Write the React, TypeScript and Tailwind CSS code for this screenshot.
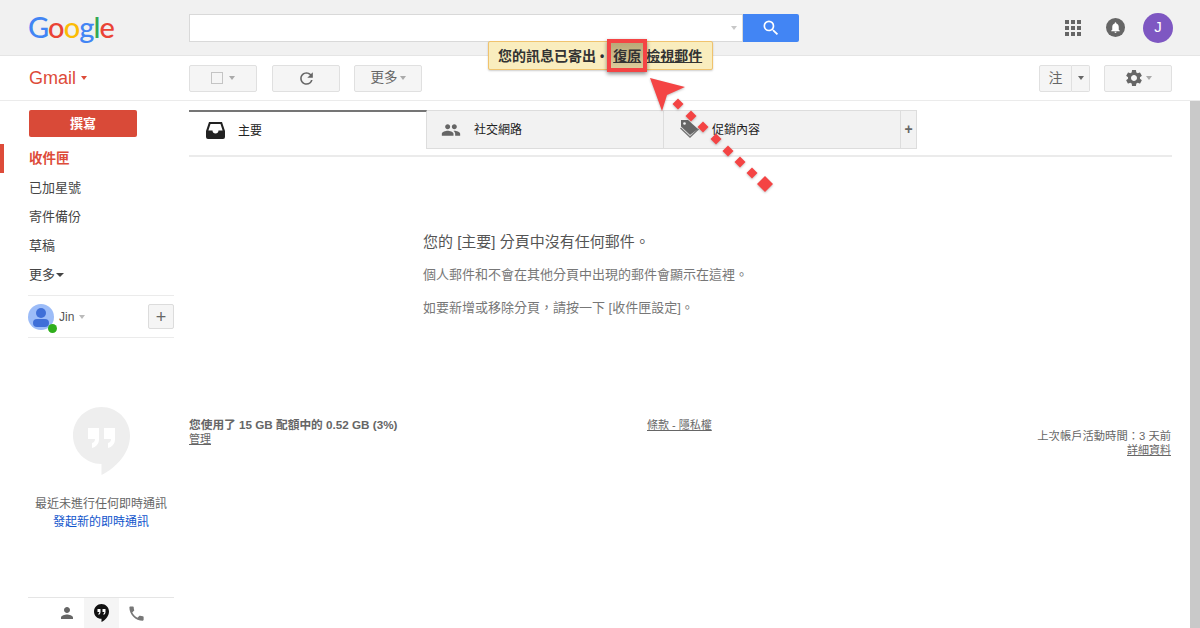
import { MdApps, MdNotifications, MdPeople, MdPerson, MdPhone, MdRefresh, MdSearch, MdSettings } from "react-icons/md";

const font = "font-['Liberation_Sans','Noto_Sans_CJK_TC',sans-serif]";

function Caret({ className }: { className: string }) {
  return <span className={"inline-block w-0 h-0 border-x-[3.5px] border-x-transparent border-t-[4px] " + className} />;
}

function ToolButton({ children, className = "w-[68px]" }: { children: React.ReactNode; className?: string }) {
  return (
    <div className={"h-[27px] flex items-center justify-center rounded-[2px] border border-[#e0e0e0] bg-[#f5f5f5] text-[#666] " + className}>
      {children}
    </div>
  );
}

function Tab({ icon, label, active, className }: { icon: React.ReactNode; label: string; active?: boolean; className: string }) {
  return (
    <div
      className={
        "h-[39px] flex items-center text-[12px] text-[#222] " +
        className +
        " " +
        (active ? "bg-white border-t-2 border-t-[#757575] border-r border-r-[#ddd]" : "bg-[#f2f2f2] border-t border-t-[#ddd] border-b border-b-[#ddd] border-r border-r-[#ddd]")
      }
    >
      <span className="w-[20px] h-[20px] flex items-center justify-center">{icon}</span>
      <span className="pt-[1px]">{label}</span>
    </div>
  );
}

function NavItem({ label, active }: { label: string; active?: boolean }) {
  return (
    <div className={active ? "h-[29px] flex items-center pl-[25px] pt-[2px] text-[13.5px] font-bold text-[#dd4b39] border-l-[4px] border-l-[#dd4b39]" : "h-[29px] flex items-center pl-[29px] text-[13px] text-[#444]"}>
      {label}
    </div>
  );
}

function Header() {
  return (
    <header className="h-[56px] bg-[#f1f1f1] border-b border-[#e5e5e5] flex items-center">
      <div className="w-[189px] pl-[28px] font-['Lato',sans-serif] font-medium text-[29px] leading-none tracking-[-0.9px] -mt-[2px]">
        <span className="text-[#4285f4]">G</span>
        <span className="text-[#ea4335]">o</span>
        <span className="text-[#fbbc05]">o</span>
        <span className="text-[#4285f4]">g</span>
        <span className="text-[#34a853]">l</span>
        <span className="text-[#ea4335]">e</span>
      </div>
      <div className="w-[554px] h-[28px] bg-white border border-[#d9d9d9] flex items-center justify-end pr-[5px]">
        <Caret className="border-t-[#c8c8c8]" />
      </div>
      <div className="w-[56px] h-[28px] bg-[#4285f4] rounded-r-[2px] flex items-center justify-center">
        <MdSearch className="text-white" size={20} />
      </div>
      <div className="ml-auto flex items-center pr-[27px]">
        <MdApps className="text-[#666]" size={24} />
        <span className="ml-[21px] w-[19px] h-[19px] rounded-full bg-[#666] flex items-center justify-center">
          <MdNotifications className="text-white" size={13} />
        </span>
        <span className="ml-[18px] w-[30px] h-[30px] rounded-full bg-[#7e57c2] flex items-center justify-center text-white text-[15px]">J</span>
      </div>
    </header>
  );
}

function Toolbar() {
  return (
    <div className="h-[45px] border-b border-[#ebebeb] flex items-center">
      <div className="w-[189px] pl-[29px] flex items-center gap-[5px] text-[#dd4b39] text-[18px]">
        Gmail
        <Caret className="border-t-[#dd4b39]" />
      </div>
      <div className="flex items-center">
        <ToolButton>
          <span className="w-[12px] h-[12px] border border-[#c4c4c4] bg-[#f5f5f5]" />
          <span className="ml-[6px] flex"><Caret className="border-t-[#aaa]" /></span>
        </ToolButton>
        <ToolButton className="w-[68px] ml-[15px]">
          <MdRefresh className="text-[#666]" size={19} />
        </ToolButton>
        <ToolButton className="w-[68px] ml-[14px]">
          <span className="text-[13.5px]">更多</span>
          <span className="ml-[2px] flex"><Caret className="border-t-[#aaa]" /></span>
        </ToolButton>
      </div>
      <div className="ml-auto flex items-center gap-[14px] pr-[28px]">
        <div className="flex">
          <ToolButton className="w-[33px] rounded-r-none">
            <span className="text-[14px]">注</span>
          </ToolButton>
          <ToolButton className="w-[18px] rounded-l-none border-l-0">
            <Caret className="border-t-[#666]" />
          </ToolButton>
        </div>
        <ToolButton>
          <MdSettings className="text-[#666]" size={20} />
          <span className="ml-[2px] flex"><Caret className="border-t-[#aaa]" /></span>
        </ToolButton>
      </div>
    </div>
  );
}

function Sidebar() {
  return (
    <aside className="w-[189px] h-[527px] shrink-0 flex flex-col">
      <div className="pl-[29px] pt-[9px]">
        <div className="w-[108px] h-[27px] rounded-[2px] bg-[#d94a38] text-white text-[13px] font-bold flex items-center justify-center">撰寫</div>
      </div>
      <nav className="mt-[7px]">
        <NavItem label="收件匣" active />
        <NavItem label="已加星號" />
        <NavItem label="寄件備份" />
        <NavItem label="草稿" />
        <div className="h-[29px] flex items-center pl-[29px] text-[13px] text-[#444]">
          更多
          <span className="ml-[1px] w-0 h-0 border-x-[4px] border-x-transparent border-t-[4px] border-t-[#444]" />
        </div>
      </nav>
      <div className="ml-[28px] w-[146px] mt-[6px] h-[43px] border-y border-[#ebebeb] flex items-center">
        <div className="relative w-[26px] h-[26px] rounded-full bg-[#9cbcf8] flex flex-col items-center overflow-visible">
          <span className="mt-[4px] w-[10px] h-[10px] rounded-full bg-[#3f6fd8]" />
          <span className="mt-[1px] w-[16px] h-[8px] rounded-full bg-[#3f6fd8]" />
          <span className="absolute -right-[3px] -bottom-[3px] w-[9px] h-[9px] rounded-full bg-[#2fae1c]" />
        </div>
        <span className="ml-[5px] text-[12px] text-[#555]">Jin</span>
        <span className="ml-[5px] flex"><Caret className="border-t-[#bbb]" /></span>
        <div className="ml-auto w-[26px] h-[25px] rounded-[2px] border border-[#dcdcdc] bg-[#f5f5f5] flex items-center justify-center text-[#666] text-[18px] leading-none">+</div>
      </div>
      <div className="mt-[69px] flex justify-center pl-[13px]">
        <svg width="57" height="68" viewBox="0 0 57 68">
          <path d="M28.500 0C12.800 0 0 12.800 0 28.500S12.800 57 28.500 57V68C44 60 57 46 57 28.500 57 12.800 44.200 0 28.500 0Z" fill="#eeeeee" />
          <path d="M15 21h11v11c0 5-3 8-7 9v-5c2-.5 3-2 3-4h-7ZM31 21h11v11c0 5-3 8-7 9v-5c2-.5 3-2 3-4h-7Z" fill="#ffffff" />
        </svg>
      </div>
      <div className="mt-[20px] ml-[13px] text-center text-[12px] leading-[18px]">
        <div className="text-[#666]">最近未進行任何即時通訊</div>
        <div className="text-[#1155cc]">發起新的即時通訊</div>
      </div>
      <div className="mt-auto ml-[28px] w-[146px] h-[31px] border-t border-[#e5e5e5] flex pl-[22px] items-stretch">
        <span className="w-[34px] flex items-center justify-center"><MdPerson className="text-[#666]" size={18} /></span>
        <span className="w-[35px] bg-[#f5f5f5] flex items-center justify-center">
          <svg width="15" height="18" viewBox="0 0 15 18">
            <path d="M7.500 0C3.400 0 0 3.300 0 7.400S3.400 14.800 7.500 14.800V18C11.500 16 15 12 15 7.400 15 3.300 11.600 0 7.500 0Z" fill="#111" />
            <path d="M3.500 5h3v3c0 1.500-1 2.500-2 3V9.500c.5-.2.8-.8.8-1.500H3.500ZM8.500 5h3v3c0 1.500-1 2.500-2 3V9.500c.5-.2.8-.8.8-1.500H8.500Z" fill="#fff" />
          </svg>
        </span>
        <span className="w-[34px] flex items-center justify-center"><MdPhone className="text-[#777]" size={19} /></span>
      </div>
    </aside>
  );
}

function Main() {
  return (
    <main className="flex-1 pt-[9px] pr-[18px]">
      <div className="flex">
        <Tab
          active
          className="w-[238px] pl-[16px] gap-[13px]"
          label="主要"
          icon={
            <svg width="19" height="17" viewBox="0 0 19 17">
              <path d="M3 0h13l3 9v6a2 2 0 0 1-2 2H2a2 2 0 0 1-2-2V9ZM4.500 2 2.400 8.500H6.500c0 1.800 1.300 3 3 3s3-1.200 3-3h4.100L14.500 2Z" fill="#222" fillRule="evenodd" />
            </svg>
          }
        />
        <Tab className="w-[237px] pl-[14px] gap-[13px]" label="社交網路" icon={<MdPeople className="text-[#666]" size={22} />} />
        <Tab
          className="w-[237px] pl-[16px] gap-[12px]"
          label="促銷內容"
          icon={
            <svg width="20" height="20" viewBox="0 0 20 20" className="-mt-[2px]">
              <path d="M1 8.500 10 17l8-7.500 1 1-9 8.500-10-9.500Z" fill="#777" />
              <path d="M1 1h7l10 9-8 6-9-8.500Z" fill="#666" />
              <circle cx="4.500" cy="4.500" r="1.300" fill="#f2f2f2" />
            </svg>
          }
        />
        <div className="w-[16px] h-[39px] bg-[#f2f2f2] border-y border-r border-[#ddd] flex items-center justify-center text-[#666] text-[14px] font-bold">+</div>
      </div>
      <div className="mt-[6px] h-[2px] bg-[#ebebeb]" />
      <section className="pl-[234px] pt-[75px]">
        <p className="text-[15px] leading-[20px] text-[#555]">您的 [主要] 分頁中沒有任何郵件。</p>
        <p className="mt-[14px] text-[13px] leading-[18px] text-[#777]">個人郵件和不會在其他分頁中出現的郵件會顯示在這裡。</p>
        <p className="mt-[15px] text-[13px] leading-[18px] text-[#777]">{"如要新增或移除分頁\uFF0C請按一下 [收件匣設定]。"}</p>
      </section>
      <footer className="mt-[101px] grid grid-cols-[458px_1fr_auto] text-[11px] leading-[14px] text-[#666]">
        <div>
          <div className="font-bold text-[11.7px]">您使用了 15 GB 配額中的 0.52 GB (3%)</div>
          <div className="underline">管理</div>
        </div>
        <div className="underline">條款 - 隱私權</div>
        <div className="pt-[11px] pr-[1px] text-right">
          <div className="text-[11.3px]">{"上次帳戶活動時間\uFF1A3 天前"}</div>
          <div className="underline">詳細資料</div>
        </div>
      </footer>
    </main>
  );
}

export default function App() {
  return (
    <div className={"relative w-[1200px] h-[628px] overflow-hidden bg-white " + font}>
      <Header />
      <Toolbar />
      <div className="flex">
        <Sidebar />
        <Main />
        <div className="w-[10px] h-[527px] shrink-0 bg-[#c9c9c9]" />
      </div>

      {/* sent notice, with the red annotation box around the undo link */}
      <div className="absolute left-[488px] top-[41px] w-[225px] h-[29px] bg-[#f9edbe] border border-[#f0c36d] rounded-[2px] shadow-[0_1px_2px_rgba(0,0,0,0.2)] flex items-start pt-[3px] pl-[9px] text-[14px] leading-[22px] font-bold text-[#333]">
        <span>您的訊息已寄出</span>
        <span className="ml-[4px] text-[12px]">•</span>
        <span className="relative block ml-[9px] w-[28px] h-[22px]">
          <span className="absolute -left-[6px] -top-[6px] w-[40px] h-[33px] border-[4px] border-[#f44444] bg-gradient-to-b from-[#b9a878] to-[#dccd9b] shadow-[0_2px_4px_rgba(0,0,0,0.45)]" />
          <span className="relative underline">復原</span>
        </span>
        <span className="ml-[5px] underline">檢視郵件</span>
      </div>

      {/* annotation arrow on top of the screenshot */}
      <svg className="absolute left-[640px] top-[70px] drop-shadow-[0_1px_1px_rgba(0,0,0,0.25)]" width="140" height="130" viewBox="640 70 140 130">
        <path d="M650 78 685 87 667 95 662 111Z" fill="#f44444" />
        <g fill="#f44444">
          <path d="M678 98.500 683.500 104 678 109.500 672.500 104Z" />
          <path d="M691 110.500 696.500 116 691 121.500 685.500 116Z" />
          <path d="M703 121.500 708.500 127 703 132.500 697.500 127Z" />
          <path d="M716 133.500 721.500 139 716 144.500 710.500 139Z" />
          <path d="M728 145.500 733.500 151 728 156.500 722.500 151Z" />
          <path d="M740 156.500 745.500 162 740 167.500 734.500 162Z" />
          <path d="M752 167.500 757.500 173 752 178.500 746.500 173Z" />
          <path d="M765 176 773 184 765 192 757 184Z" />
        </g>
      </svg>
    </div>
  );
}
